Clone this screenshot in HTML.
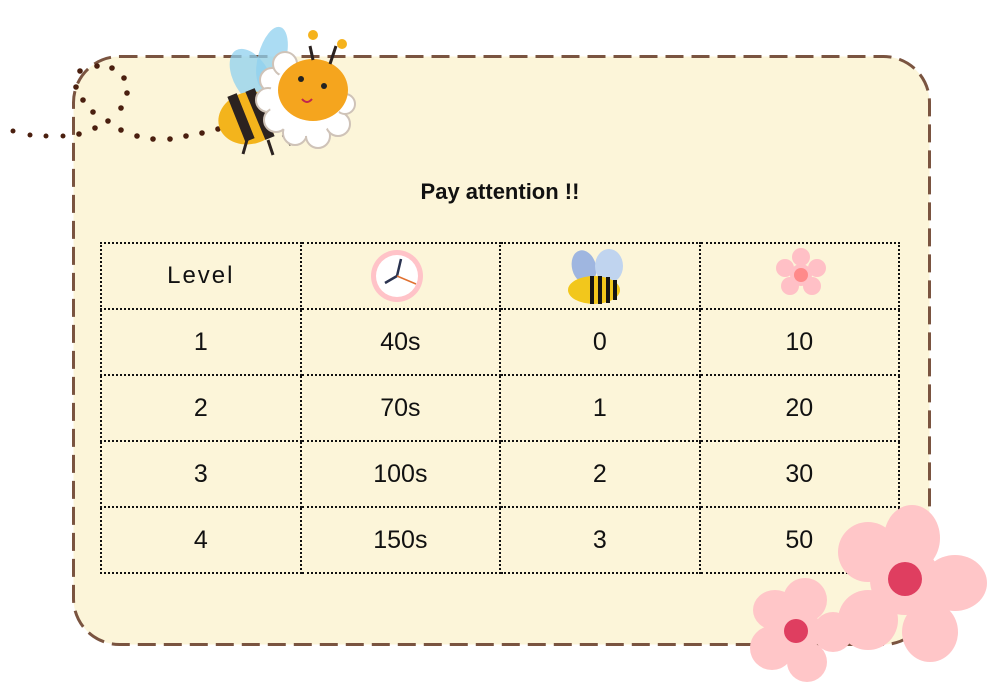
<!DOCTYPE html>
<html><head><meta charset="utf-8"><style>
*{margin:0;padding:0;box-sizing:border-box}
body{width:1000px;height:700px;background:#fff;position:relative;overflow:hidden;font-family:"Liberation Sans",sans-serif}
h1{position:absolute;left:0;width:1000px;top:179px;text-align:center;font-size:22px;font-weight:bold;color:#111}
table{position:absolute;left:100px;top:242px;width:800px;border-collapse:collapse}
td{border:2px dotted #111;width:200px;height:66px;text-align:center;font-size:25px;color:#111;vertical-align:middle}
svg{position:absolute}
</style></head><body>
<svg width="1000" height="700" style="left:0;top:0">
<rect x="73.5" y="56.5" width="856" height="588" rx="46" fill="#fcf5d9" stroke="#7a5440" stroke-width="3" stroke-dasharray="18 8"/>
<g fill="#4a1f0f">
<circle cx="13" cy="131" r="2.5"/><circle cx="30" cy="135" r="2.5"/><circle cx="46" cy="136" r="2.5"/><circle cx="63" cy="136" r="2.5"/><circle cx="79" cy="134" r="2.8"/><circle cx="95" cy="128" r="2.8"/><circle cx="108" cy="121" r="2.8"/><circle cx="121" cy="108" r="2.8"/><circle cx="127" cy="93" r="2.8"/><circle cx="124" cy="78" r="2.8"/><circle cx="112" cy="68" r="2.8"/><circle cx="97" cy="66" r="2.8"/><circle cx="80" cy="71" r="2.8"/><circle cx="76" cy="87" r="2.8"/><circle cx="83" cy="100" r="2.8"/><circle cx="93" cy="112" r="2.8"/><circle cx="121" cy="130" r="2.8"/><circle cx="137" cy="136" r="2.8"/><circle cx="153" cy="139" r="2.8"/><circle cx="170" cy="139" r="2.8"/><circle cx="186" cy="136" r="2.8"/><circle cx="202" cy="133" r="2.8"/><circle cx="218" cy="129" r="2.8"/>
</g>
<ellipse cx="252" cy="78" rx="18" ry="32" fill="#8fd0ef" opacity=".75" transform="rotate(-30 252 78)"/>
<ellipse cx="272" cy="58" rx="14" ry="32" fill="#8fd0ef" opacity=".75" transform="rotate(15 272 58)"/>
<ellipse cx="250" cy="118" rx="32" ry="26" fill="#f3b41c" transform="rotate(-15 250 118)"/>
<path d="M232 95 L250 140 M250 90 L270 138" stroke="#2b2220" stroke-width="10"/>
<path d="M247 140 l-4 14 M268 140 l5 15 M283 135 l8 10" stroke="#2b2220" stroke-width="3"/>
<g fill="#fff" stroke="#cfc3b8" stroke-width="2">
<circle cx="272" cy="80" r="12"/><circle cx="268" cy="100" r="12"/><circle cx="276" cy="120" r="12"/><circle cx="295" cy="133" r="12"/><circle cx="318" cy="136" r="12"/><circle cx="338" cy="124" r="12"/><circle cx="345" cy="104" r="10"/><circle cx="285" cy="64" r="12"/>
</g>
<circle cx="305" cy="100" r="36" fill="#fff"/>
<ellipse cx="313" cy="90" rx="35" ry="31" fill="#f5a51e"/>
<path d="M313 60 l-3-14 M330 64 l6-18" stroke="#2b2220" stroke-width="3"/>
<circle cx="313" cy="35" r="5" fill="#f5b21c"/><circle cx="342" cy="44" r="5" fill="#f5b21c"/>
<circle cx="301" cy="79" r="3" fill="#222"/><circle cx="324" cy="86" r="3" fill="#222"/>
<path d="M302 99 q5 6 10 0" stroke="#c0264f" stroke-width="2" fill="none"/>
<circle cx="397" cy="276" r="26" fill="#ffc3c8"/><circle cx="397" cy="276" r="21" fill="#fff"/>
<path d="M397 276 l4-17 M397 276 l-12 7" stroke="#2a3350" stroke-width="2.5"/><path d="M397 276 l19 8" stroke="#e07030" stroke-width="1.5"/>
<ellipse cx="584" cy="267" rx="12" ry="17" fill="#9fb6e0" transform="rotate(-15 584 267)"/>
<ellipse cx="609" cy="266" rx="14" ry="17" fill="#c0d4ef"/>
<ellipse cx="594" cy="290" rx="26" ry="14" fill="#f2c71c"/>
<path d="M592 276v28M600 276v28M608 277v26M615 280v20" stroke="#151515" stroke-width="4"/>
<g fill="#ffc0c6"><circle cx="801" cy="257" r="9"/><circle cx="817" cy="268" r="9"/><circle cx="812" cy="286" r="9"/><circle cx="790" cy="286" r="9"/><circle cx="785" cy="268" r="9"/></g><circle cx="801" cy="275" r="11" fill="#ffc0c6"/><circle cx="801" cy="275" r="7" fill="#ff8a8a"/>
</svg>
<h1>Pay attention !!</h1>
<table>
<tr><td style="font-size:24px;letter-spacing:2px">Level</td><td></td><td></td><td></td></tr>
<tr><td>1</td><td>40s</td><td>0</td><td>10</td></tr>
<tr><td>2</td><td>70s</td><td>1</td><td>20</td></tr>
<tr><td>3</td><td>100s</td><td>2</td><td>30</td></tr>
<tr><td>4</td><td>150s</td><td>3</td><td>50</td></tr>
</table>
<svg width="1000" height="700" style="left:0;top:0;pointer-events:none">
<g fill="#ffc6c8">
<ellipse cx="912" cy="538" rx="28" ry="33"/><ellipse cx="955" cy="583" rx="32" ry="28"/><ellipse cx="930" cy="632" rx="28" ry="30"/><ellipse cx="868" cy="620" rx="30" ry="30"/><ellipse cx="868" cy="552" rx="30" ry="30"/><circle cx="905" cy="580" r="35"/>
</g><circle cx="905" cy="579" r="17" fill="#df3e60"/>
<g fill="#ffc6c8">
<ellipse cx="805" cy="600" rx="22" ry="22"/><ellipse cx="833" cy="632" rx="20" ry="20"/><ellipse cx="807" cy="662" rx="20" ry="20"/><ellipse cx="772" cy="648" rx="22" ry="22"/><ellipse cx="775" cy="610" rx="22" ry="20"/><circle cx="797" cy="631" r="24"/>
</g><circle cx="796" cy="631" r="12" fill="#df3e60"/>
</svg>
</body></html>
